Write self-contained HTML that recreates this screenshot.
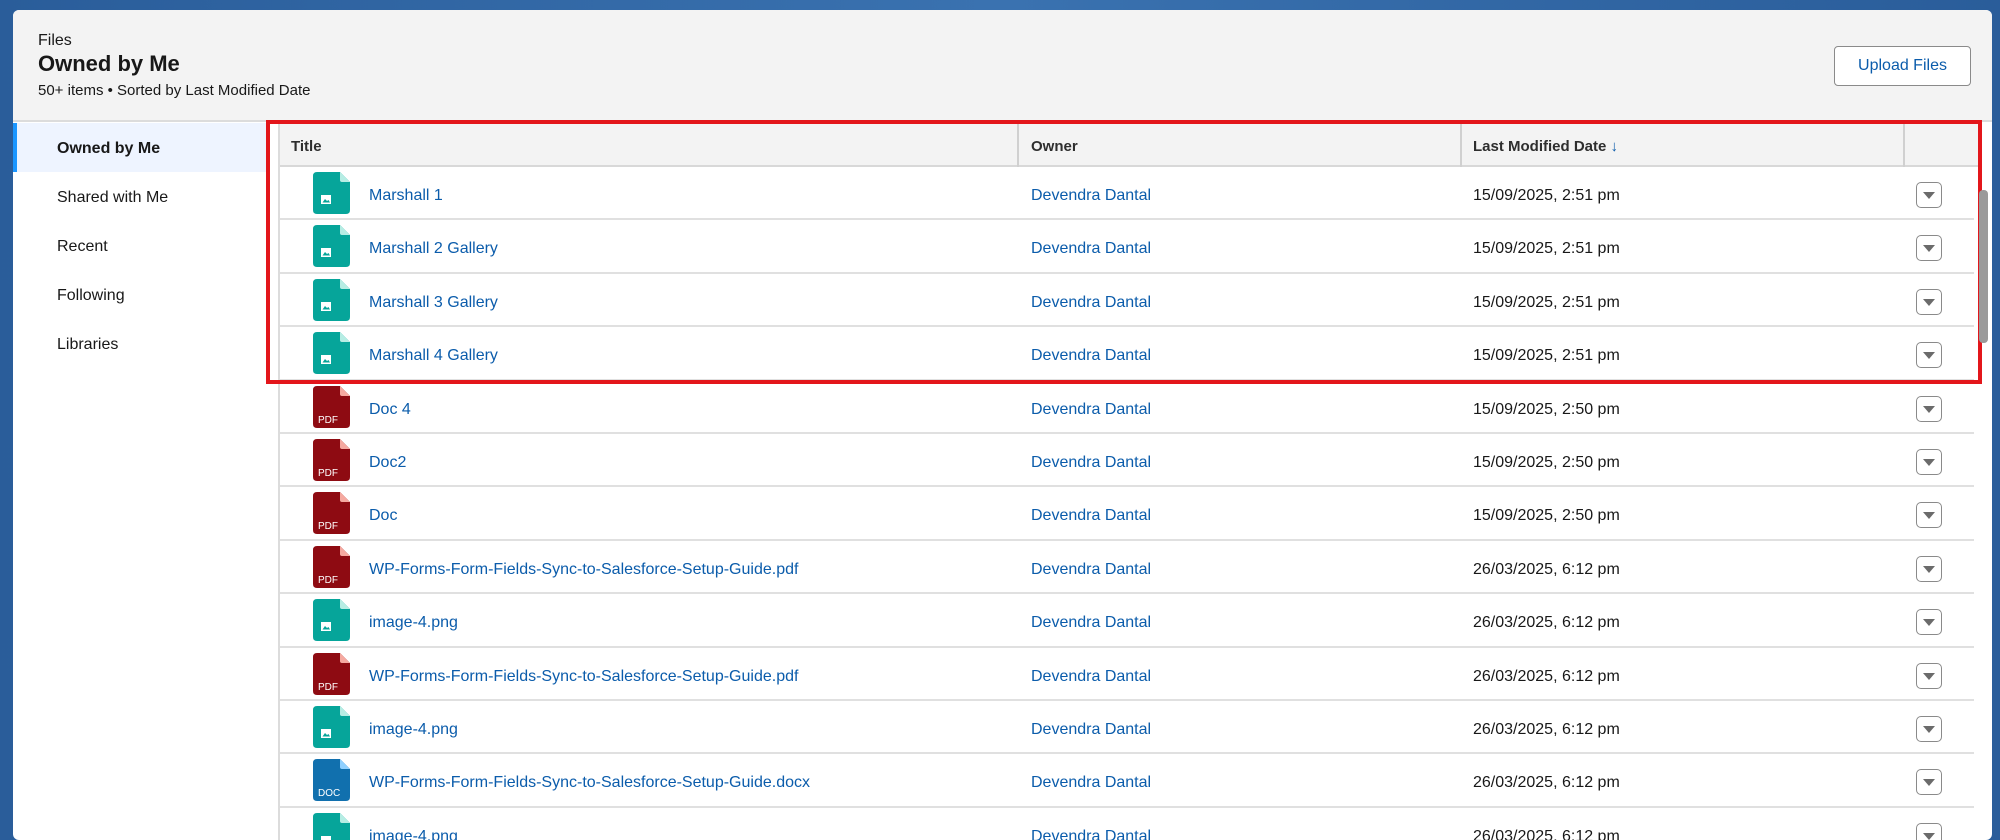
<!DOCTYPE html>
<html><head><meta charset="utf-8"><style>
*{box-sizing:border-box;margin:0;padding:0}
body{width:2000px;height:824px;overflow:hidden;font-family:"Liberation Sans",sans-serif;background:linear-gradient(90deg,#2a5d9a,#3a72b0 50%,#2a5d9a);position:relative}
.card{position:absolute;left:13px;top:10px;width:1979px;height:830px;background:#fff;border-radius:6px;overflow:hidden}
.hdr{position:absolute;left:0;top:0;width:100%;height:112px;background:#f3f3f3;border-bottom:2px solid #dcdcdc}
.t1{position:absolute;left:25px;top:22px;font-size:16px;color:#181818}
.t2{position:absolute;left:25px;top:41px;font-size:22px;font-weight:bold;color:#181818}
.t3{position:absolute;left:25px;top:72px;font-size:15px;color:#181818}
.btn{position:absolute;left:1821px;top:36px;width:137px;height:40px;border:1px solid #8a8a8a;border-radius:4px;background:#fff;color:#0b5cab;font-size:16px;text-align:center;line-height:38px}
.side{position:absolute;left:0;top:113px;width:255px;height:720px}
.si{position:absolute;left:44px;font-size:16px;color:#181818}
.sel{position:absolute;left:0;top:0;width:255px;height:49px;background:#eef4ff;border-left:4px solid #1b96ff}
.tbl{position:absolute;left:265px;top:114px;width:1700px;height:720px;border-left:2px solid #dcdcdc}
.th{position:absolute;left:0;top:0;width:100%;height:43px;background:#f3f3f3;border-bottom:2px solid #d8d8d8;font-size:15px;font-weight:bold;color:#2e2e2e}
.th span{position:absolute;top:14px}
.cs{position:absolute;top:0;width:2px;height:43px;background:#d0d0d0}
.row{position:absolute;left:0;width:1694px;height:53.4px;border-bottom:2px solid #e0e0e0;font-size:16px}
.row .ic{position:absolute;left:33px;top:5px;width:37px;height:42px}
.row .n{position:absolute;left:89px;top:20px;color:#0b5cab}
.row .o{position:absolute;left:751px;top:20px;color:#0b5cab}
.row .d{position:absolute;left:1193px;top:20px;color:#181818}
.row .dd{position:absolute;left:1636px;top:15px;width:26px;height:26px;border:1.5px solid #8a8a8a;border-radius:5px}
.row .dd:after{content:"";position:absolute;left:6px;top:9px;border-left:6px solid transparent;border-right:6px solid transparent;border-top:7px solid #6b6b6b}
.red{position:absolute;left:266px;top:120px;width:1716px;height:264px;border:4px solid #e3161b}
.sb{position:absolute;left:1979px;top:190px;width:9px;height:153px;background:#9a9a9a;border-radius:4px}
</style></head><body>
<div class="card">
<div class="hdr">
<div class="t1">Files</div><div class="t2">Owned by Me</div>
<div class="t3">50+ items • Sorted by Last Modified Date</div>
<div class="btn">Upload Files</div>
</div>
<div class="side">
<div class="sel"></div>
<div class="si" style="top:17px;font-weight:bold">Owned by Me</div>
<div class="si" style="top:66px">Shared with Me</div>
<div class="si" style="top:115px">Recent</div>
<div class="si" style="top:164px">Following</div>
<div class="si" style="top:213px">Libraries</div>
</div>
<div class="tbl">
<div class="th"><span style="left:11px">Title</span><div class="cs" style="left:737px"></div><span style="left:751px">Owner</span><div class="cs" style="left:1180px"></div><span style="left:1193px">Last Modified Date <span style="color:#0b5cab;position:static">↓</span></span><div class="cs" style="left:1623px"></div></div>
<div id="rows"></div>
</div>
</div>
<div class="red"></div>
<div class="sb"></div>
<script>
var img='<svg class="ic" viewBox="0 0 37 42"><path d="M4 0H27L37 10V38Q37 42 33 42H4Q0 42 0 38V4Q0 0 4 0Z" fill="#06a59a"/><path d="M27 0L37 10H29Q27 10 27 8Z" fill="#b6ede4"/><rect x="8" y="23" width="10" height="9" fill="#fff"/><path d="M9.5 30.5L12 27L14 29L15.5 28L17 30.5Z" fill="#06a59a"/></svg>';
function lab(c,f,t){return '<svg class="ic" viewBox="0 0 37 42"><path d="M4 0H27L37 10V38Q37 42 33 42H4Q0 42 0 38V4Q0 0 4 0Z" fill="'+c+'"/><path d="M27 0L37 10H29Q27 10 27 8Z" fill="'+f+'"/><text x="5" y="37" font-size="10" fill="#fff" font-family="Liberation Sans">'+t+'</text></svg>';}
var pdf=lab('#8e0b12','#f5a9a0','PDF'),doc=lab('#1170ae','#8fd0ff','DOC');
var W='WP-Forms-Form-Fields-Sync-to-Salesforce-Setup-Guide';
var R=[[img,'Marshall 1','15/09/2025, 2:51 pm'],[img,'Marshall 2 Gallery','15/09/2025, 2:51 pm'],[img,'Marshall 3 Gallery','15/09/2025, 2:51 pm'],[img,'Marshall 4 Gallery','15/09/2025, 2:51 pm'],[pdf,'Doc 4','15/09/2025, 2:50 pm'],[pdf,'Doc2','15/09/2025, 2:50 pm'],[pdf,'Doc','15/09/2025, 2:50 pm'],[pdf,W+'.pdf','26/03/2025, 6:12 pm'],[img,'image-4.png','26/03/2025, 6:12 pm'],[pdf,W+'.pdf','26/03/2025, 6:12 pm'],[img,'image-4.png','26/03/2025, 6:12 pm'],[doc,W+'.docx','26/03/2025, 6:12 pm'],[img,'image-4.png','26/03/2025, 6:12 pm']];
var h='';R.forEach(function(r,i){h+='<div class="row" style="top:'+(43+i*53.4)+'px">'+r[0]+'<span class="n">'+r[1]+'</span><span class="o">Devendra Dantal</span><span class="d">'+r[2]+'</span><div class="dd"></div></div>';});
document.getElementById('rows').innerHTML=h;
</script>
</body></html>
